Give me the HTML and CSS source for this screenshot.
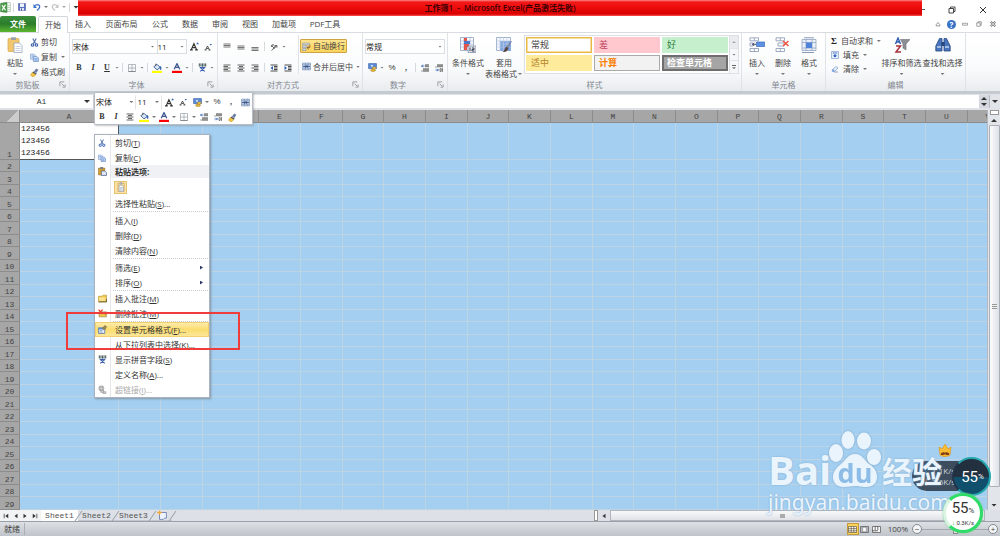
FILE: index.html
```html
<!DOCTYPE html>
<html lang="zh-CN">
<head>
<meta charset="utf-8">
<title>工作簿1 - Microsoft Excel</title>
<link rel="stylesheet" href="styles.css">
</head>
<body>
<svg class="defs" aria-hidden="true">
  <defs>
    <symbol id="i-excel" viewBox="0 0 16 16"><path d="M5 1h10v13H5z" fill="#fff" stroke="#9bb59b"/><path d="M1 2l9-1v14l-9-1z" fill="#4ea04e" stroke="#2c7a2f"/><path d="M3 5l5 7M8 4l-5 8" stroke="#fff" stroke-width="1.8"/><path d="M11 5h3M11 8h3M11 11h3" stroke="#8cba8c"/></symbol>
    <symbol id="i-save" viewBox="0 0 16 16"><path d="M1 1h14v14H1z" fill="#5a6fc4" stroke="#3f4d9c"/><path d="M4 1h8v7H4z" fill="#eef2fb"/><path d="M4 10h8v5H4z" fill="#dfe4f2"/><path d="M6 11h2v4H6z" fill="#3f4d9c"/></symbol>
    <symbol id="i-undo" viewBox="0 0 16 16"><path d="M3 6c5-5 12-2 10 3-1 3-3 4-5 6" fill="none" stroke="currentColor" stroke-width="2.6"/><path d="M1 2v8h7z" fill="currentColor"/></symbol>
    <symbol id="i-paste" viewBox="0 0 16 16"><rect x="1" y="1.500" width="11" height="13" rx="1" fill="#f2c66d" stroke="#d9a64a" stroke-width=".7"/><rect x="4" y=".3" width="5" height="2.700" rx=".6" fill="#9aa0aa"/><path d="M7 6h5.500L15 8.500V15.500H7z" fill="#fff" stroke="#8a9bb5" stroke-width=".7"/><path d="M8.500 9.500h5M8.500 11.500h5M8.500 13.500h5" stroke="#b0bfd5" stroke-width=".7"/></symbol>
    <symbol id="i-cut" viewBox="0 0 16 16"><path d="M5 1l5 9M11 1l-5 9" stroke="#5574ad" stroke-width="2"/><circle cx="4.500" cy="12.500" r="2.300" fill="none" stroke="#2e57a8" stroke-width="1.900"/><circle cx="11.500" cy="12.500" r="2.300" fill="none" stroke="#2e57a8" stroke-width="1.900"/></symbol>
    <symbol id="i-copy" viewBox="0 0 16 16"><path d="M1 2h6l2 2v7H1z" fill="#dce9fa" stroke="#5f87c4"/><path d="M6 6h6l3 3v6H6z" fill="#c5dbf7" stroke="#4873b8"/><path d="M8 10h5M8 12.500h5M3 5h3M3 7.500h2" stroke="#4873b8"/></symbol>
    <symbol id="i-brush" viewBox="0 0 16 16"><path d="M11 1l4 2-4 6-4-3z" fill="#6b7da5"/><path d="M6 6l6 4-2 2-6-4z" fill="#444e66"/><path d="M4 8l6 4-4 4-5-3z" fill="#f3c540" stroke="#c89421"/></symbol>
    <symbol id="i-growA" viewBox="0 0 16 16"><path d="M2 14L7 3l5 11M4 10h6M0 14h5M9 14h5" fill="none" stroke="#333" stroke-width="2"/><path d="M11 4l2.500-3.500L16 4z" fill="#2f62b5"/></symbol>
    <symbol id="i-shrinkA" viewBox="0 0 16 16"><path d="M3 14L7 6l4 8M5 11h4M1 14h4M9 14h4" fill="none" stroke="#333" stroke-width="1.600"/><path d="M11 2h5l-2.500 3z" fill="#2f62b5"/></symbol>
    <symbol id="i-borders" viewBox="0 0 16 16"><path d="M1 1h14v14H1zM8 1v14M1 8h14" fill="none" stroke="#9298a2" stroke-width="1.300"/><path d="M1 15h14" stroke="#777" stroke-width="1.500"/></symbol>
    <symbol id="i-fill" viewBox="0 0 16 16"><path d="M3 6l5-4 5 5-5 4z" fill="#dce6f5" stroke="#44679f" stroke-width="1.600"/><path d="M6 5V1" stroke="#555" stroke-width="1.300"/><path d="M13 5c2 1 2 4 1 6-1-1-2-4-1-6z" fill="#3768b8" stroke="#3768b8"/><path d="M0 12.500h16V16H0z" fill="#ff0"/></symbol>
    <symbol id="i-color" viewBox="0 0 16 16"><path d="M3.500 10L8 1l4.500 9M5.500 7h5" fill="none" stroke="#3b5690" stroke-width="2"/><path d="M0 12.500h16V16H0z" fill="#f00"/></symbol>
    <symbol id="i-phon" viewBox="0 0 16 16"><path d="M1 2h14M1 5h14M3 1v5M8 1v5M13 1v5" stroke="#455" stroke-width="1.400"/><path d="M3 8h10M8 6v2M4 8l8 7M12 8l-8 7" fill="none" stroke="#3f62b0" stroke-width="1.900"/></symbol>
    <symbol id="i-vtop" viewBox="0 0 16 16"><path d="M1 2h14M1 5h14M1 8h14" stroke="#777" stroke-width="2.200"/></symbol>
    <symbol id="i-vmid" viewBox="0 0 16 16"><path d="M1 6h14M1 9h14M1 12h14" stroke="#777" stroke-width="2.200"/></symbol>
    <symbol id="i-vbot" viewBox="0 0 16 16"><path d="M1 9h14M1 12h14M1 15h14" stroke="#777" stroke-width="2.200"/></symbol>
    <symbol id="i-left" viewBox="0 0 16 16"><path d="M1 2h14M1 5h9M1 8h14M1 11h9M1 14h14" stroke="#555" stroke-width="1.800"/></symbol>
    <symbol id="i-center" viewBox="0 0 16 16"><path d="M1 2h14M4 5h8M1 8h14M4 11h8M1 14h14" stroke="#555" stroke-width="1.800"/></symbol>
    <symbol id="i-right" viewBox="0 0 16 16"><path d="M1 2h14M6 5h9M1 8h14M6 11h9M1 14h14" stroke="#555" stroke-width="1.800"/></symbol>
    <symbol id="i-orient" viewBox="0 0 16 16"><path d="M2 4l7 7M5 2l7 7M2 8l4-5M6 12l4-5M3 15L14 5M14 5v4M14 5h-4" fill="none" stroke="#555" stroke-width="1.700"/></symbol>
    <symbol id="i-outdent" viewBox="0 0 16 16"><path d="M1 2h14M8 5h7M8 8h7M8 11h7M1 14h14" stroke="#444" stroke-width="1.900"/><path d="M6 4v8L1 8z" fill="#2f62b5"/></symbol>
    <symbol id="i-indent" viewBox="0 0 16 16"><path d="M1 2h14M8 5h7M8 8h7M8 11h7M1 14h14" stroke="#444" stroke-width="1.900"/><path d="M1 4v8l5-4z" fill="#2f62b5"/></symbol>
    <symbol id="i-wrap" viewBox="0 0 16 16"><path d="M1 2h12v3H1zM1 7h8v3H1zM1 12h6v3H1z" fill="#e7eefb" stroke="#6d7da0"/><path d="M14 5v5h-4M12 8l-3 2.500 3 2.500" fill="none" stroke="#8b5a1e" stroke-width="1.500"/></symbol>
    <symbol id="i-merge" viewBox="0 0 16 16"><path d="M1 2h14v12H1z" fill="#cfdcf0" stroke="#5f7ca8"/><path d="M1 5h14M1 11h14M6 2v3M11 2v3M6 11v3M11 11v3" stroke="#5f7ca8"/><path d="M2 8h4M10 8h4M6 6v4M10 6v4M7 9.500l1-3 1 3" fill="none" stroke="#1f3b78" stroke-width="1.400"/></symbol>
    <symbol id="i-money" viewBox="0 0 16 16"><path d="M1 1h14v9H1z" fill="#5b8ad8" stroke="#31589f"/><circle cx="7" cy="5" r="2" fill="#cfe0fa"/><ellipse cx="11" cy="9" rx="3.500" ry="2" fill="#f4ce55" stroke="#b18420"/><ellipse cx="9" cy="13" rx="4.500" ry="2" fill="#e9ba3a" stroke="#a67a18"/></symbol>
    <symbol id="i-incdec" viewBox="0 0 16 16"><path d="M7 4H1M3.500 1.500L1 4l2.500 2.500" fill="none" stroke="#2f62b5" stroke-width="1.700"/><path d="M9 1h2v5H9zM13 1h2v5h-2zM5 9h2v6H5zM9 9h2v6H9zM13 9h2v6h-2z" fill="none" stroke="#555" stroke-width="1.300"/><path d="M2 13v2" stroke="#444" stroke-width="2"/></symbol>
    <symbol id="i-decdec" viewBox="0 0 16 16"><path d="M1 12h6M4.500 9.500L7 12l-2.500 2.500" fill="none" stroke="#2f62b5" stroke-width="1.700"/><path d="M5 1h2v5H5zM9 1h2v5H9zM13 1h2v5h-2zM10 9h2v6h-2zM14 9h1v6h-1z" fill="none" stroke="#555" stroke-width="1.300"/><path d="M2 5v2" stroke="#444" stroke-width="2"/></symbol>
    <symbol id="i-cond" viewBox="0 0 16 16"><path d="M.5.500h13v13H.5z" fill="#fff" stroke="#a3b4cf"/><path d="M.5 4h13M.5 7h13M.5 10h13M4 0v14M10 0v14" stroke="#a3b4cf" stroke-width=".7"/><path d="M4 1h3v3H4zM4 7h5v3H4zM4 10h3v3H4z" fill="#e55349"/><path d="M4 4h6v3H4z" fill="#4b79c9"/><path d="M8 9h8v6.500H8z" fill="#dce3ee" stroke="#77859b" stroke-width=".7"/><path d="M10 10.500v3.500M12 11h2v1.500h-2V14h2.500" fill="none" stroke="#445"/></symbol>
    <symbol id="i-tblfmt" viewBox="0 0 16 16"><path d="M.5.500h14v13H.5z" fill="#f5f9ff" stroke="#a3b4cf"/><path d="M4 4h11v10H4z" fill="#7fa7e2"/><path d="M.5 4h14M.5 7h14M.5 10h14M4 0v14M7.500 0v14M11 0v14" stroke="#b9c8df" stroke-width=".7"/><path d="M15.500 4l-5 6 1.500 1.500z" fill="#8c94a5" stroke="#69718a" stroke-width=".5"/><path d="M10.500 9.500l2 2c-1 3-3 3.500-6 3.500 2-1 2-4 4-5.500z" fill="#5a4a46"/></symbol>
    <symbol id="i-insert" viewBox="0 0 16 16"><path d="M1 .8h8.500v3H1zM1 11.500h8.500v3H1zM5.300.8v3M5.300 11.500v3M1 6h3v3H1z" fill="#fff" stroke="#8798b3" stroke-width=".8"/><path d="M7.500 5h8v4.500h-8z" fill="#5d91e3" stroke="#3b6cb8" stroke-width=".7"/><path d="M7 7.300H3.500M5 5.800L3.500 7.300 5 8.800" fill="none" stroke="#335" stroke-width=".9"/></symbol>
    <symbol id="i-delete" viewBox="0 0 16 16"><path d="M1 .8h8.500v3H1zM1 11.500h8.500v3H1zM5.300.8v3M5.300 11.500v3M3 6h6v3H3z" fill="#fff" stroke="#8798b3" stroke-width=".8"/><path d="M8 4l5.500 5M13.500 4L8 9" stroke="#f0523d" stroke-width="1.500"/></symbol>
    <symbol id="i-format" viewBox="0 0 16 16"><path d="M1 2.500h14v11H1z" fill="#eaf0fa" stroke="#93a4c2" stroke-width=".8"/><path d="M1 5.500h14M1 11h14M5 2v12M11 2v12" stroke="#93a4c2" stroke-width=".8"/><path d="M5 5.500h6V11H5z" fill="#4f83da"/><path d="M3 .8h10M1 15.500h12" stroke="#6a7fa5" stroke-width=".8"/></symbol>
    <symbol id="i-filldown" viewBox="0 0 16 16"><path d="M1 1h14v14H1z" fill="#e6effc" stroke="#5a7fc0"/><path d="M4 3h8v2H4z" fill="#fff" stroke="#5a7fc0"/><path d="M8 6v4M5.500 9.500h5L8 12z" fill="#2459bd" stroke="#2459bd" stroke-width="2"/></symbol>
    <symbol id="i-eraser" viewBox="0 0 16 16"><path d="M2 10l8-7 4 3-7 7H3z" fill="#e8f0fb" stroke="#6d8fc5" stroke-width="1.300"/><path d="M2 10l2-2 4 4-1 1H3z" fill="#7ea3de"/><path d="M6 14h8" stroke="#7a8cab" stroke-width="1.500"/></symbol>
    <symbol id="i-sort" viewBox="0 0 16 16"><path d="M1.500 7L4 1l2.500 6M2.500 5h3" fill="none" stroke="#2e5cb4" stroke-width="1.400"/><path d="M2 9h4.500L2 15h5" fill="none" stroke="#a8313c" stroke-width="1.500"/><path d="M6.500 2.500h9.500l-4 4.500v6l-3-2V7z" fill="#8c8f94" stroke="#6d7075" stroke-width=".6"/></symbol>
    <symbol id="i-find" viewBox="0 0 16 16"><path d="M4.500 1.500H7v12.500H.8V9zM11.500 1.500H9v12.500h6.200V9z" fill="#4a76bd" stroke="#27477f" stroke-width=".8"/><path d="M6.500 5h3v4h-3z" fill="#27477f"/><path d="M2 10h4M10 10h4" stroke="#bfd3f2" stroke-width="1.600"/></symbol>
    <symbol id="i-clip2" viewBox="0 0 16 16"><path d="M3 2h10v13H3z" fill="#f6dca0" stroke="#c39c50"/><path d="M6 .5h4V4H6z" fill="#a8acb3"/><path d="M5 5h4l3 3v7H5z" fill="#fff" stroke="#8b98ae"/><path d="M6.500 9h4M6.500 11h4M6.500 13h4" stroke="#8b98ae"/></symbol>
    <symbol id="i-pastesmall" viewBox="0 0 16 16"><path d="M1 2h11v12H1z" fill="#d9a12c" stroke="#7d6326"/><path d="M4 0h5v4H4z" fill="#7b7f88"/><path d="M6 7h6l3 3v5H6z" fill="#dfe9fa" stroke="#4b5f88" stroke-width="1.300"/></symbol>
    <symbol id="i-note" viewBox="0 0 16 16"><path d="M1 4h6l2-2h6v12H1z" fill="#edc64d" stroke="#b08b25"/><path d="M2 6h11v6H2z" fill="#fae58e"/><path d="M1 14h14V9" fill="none" stroke="#5d5843" stroke-width="1.500"/></symbol>
    <symbol id="i-notedel" viewBox="0 0 16 16"><path d="M2 5h13v9H2z" fill="#edc64d" stroke="#8e793d"/><path d="M1 1l7 8M8 1L1 9" stroke="#e33b25" stroke-width="2.300"/><path d="M10 6l4 5" stroke="#c16a2d" stroke-width="1.500"/></symbol>
    <symbol id="i-cells" viewBox="0 0 16 16"><path d="M1 5h11v10H1z" fill="#e7f0fe" stroke="#54749f" stroke-width="1.400"/><path d="M1 5h10v3H1z" fill="#5b8ad8"/><path d="M3 10h5M3 12.500h5" stroke="#54749f"/><path d="M8 6l4-5 3 2-2 4-3 1z" fill="#a98f4c" stroke="#5b563f"/></symbol>
    <symbol id="i-link" viewBox="0 0 16 16"><circle cx="6" cy="6" r="5" fill="#a9a9a9"/><path d="M1 6h10M6 1v10" stroke="#ddd"/><path d="M5 10h5v3H5zM9 12h5v3H9z" fill="#ddd" stroke="#999" stroke-width="1.300"/></symbol>
    <symbol id="i-newsheet" viewBox="0 0 16 16"><path d="M4 4h11v9h-3l-2 2H4z" fill="#eef4ff" stroke="#6377a8" stroke-width="1.300"/><path d="M4 1l1 2 3 1-3 1-1 3-1-3-3-1 3-1z" fill="#f2a93b" stroke="#f2a93b"/></symbol>
    <symbol id="i-launch" viewBox="0 0 8 8"><path d="M1 6V1h5" fill="none" stroke="#8f959d"/><path d="M3 3l3 3M7 4v3H4" fill="none" stroke="#8f959d"/></symbol>
    <symbol id="i-restore" viewBox="0 0 8 8"><path d="M1 2.500h4.500V7H1zM2.500 2.500V1H7v4.500H5.500" fill="none" stroke="currentColor" stroke-width=".9"/></symbol>
    <symbol id="i-close" viewBox="0 0 8 8"><path d="M1 1l6 6M7 1L1 7" stroke="currentColor"/></symbol>
    <symbol id="i-xbox" viewBox="0 0 8 8"><path d="M1 1l6 6M7 1L1 7" stroke="#777" stroke-width="2.400"/><path d="M1 1l6 6M7 1L1 7" stroke="#fff" stroke-width=".8"/></symbol>
    <symbol id="i-min" viewBox="0 0 8 8"><path d="M.5 3h7v2.500h-7z" fill="#fff" stroke="#777" stroke-width=".9"/></symbol>
    <symbol id="i-caretup" viewBox="0 0 8 8"><path d="M1.500 5L4 2l2.500 3v1.500h-5z" fill="#fff" stroke="#777"/></symbol>
    <symbol id="i-grid" viewBox="0 0 10 8"><path d="M.5.500h9v7h-9zM.5 3h9M.5 5.500h9M3.500.500v7M6.500.500v7" fill="#fff" stroke="#625638" stroke-width=".8"/></symbol>
    <symbol id="i-page" viewBox="0 0 10 8"><path d="M.5.500h9v7h-9z" fill="#b8bcc2" stroke="#666"/><path d="M3 1.500h4v5H3z" fill="#fff" stroke="#777" stroke-width=".6"/></symbol>
    <symbol id="i-break" viewBox="0 0 10 8"><path d="M.5.500h9v7h-9z" fill="#fff" stroke="#666"/><path d="M3.500 0v5M6.500 0v5M0 5.500h6.500" stroke="#555"/></symbol>
  </defs>
</svg>

<div class="app">
  <header class="titlebar">
    <div class="quick">
      <svg class="ic11"><use href="#i-excel"/></svg><span class="vsep"></span>
      <button aria-label="保存"><svg class="ic8"><use href="#i-save"/></svg></button>
      <button class="blue" aria-label="撤消"><svg class="ic8"><use href="#i-undo"/></svg></button><i class="caret"></i>
      <button class="redo" aria-label="恢复"><svg class="ic8"><use href="#i-undo"/></svg></button><i class="caret faint"></i>
      <span class="vsep"></span><i class="caret big"></i>
    </div>
    <h1>工作簿1&nbsp; -&nbsp; Microsoft Excel(产品激活失败)</h1>
    <div class="wincontrols">
      <button class="minimize" aria-label="最小化"></button>
      <button aria-label="还原"><svg class="ic8"><use href="#i-restore"/></svg></button>
      <button aria-label="关闭"><svg class="ic8"><use href="#i-close"/></svg></button>
    </div>
  </header>

  <nav class="tabs">
    <button class="file">文件</button>
    <button class="active">开始</button>
    <button>插入</button>
    <button class="wide">页面布局</button>
    <button>公式</button>
    <button>数据</button>
    <button>审阅</button>
    <button>视图</button>
    <button class="mid">加载项</button>
    <button class="pdf">PDF工具</button>
    <div class="tabtools">
      <button aria-label="折叠功能区"><svg class="ic6"><use href="#i-caretup"/></svg></button>
      <button class="help" aria-label="帮助">?</button>
      <button aria-label="最小化窗口"><svg class="ic6"><use href="#i-min"/></svg></button>
      <button aria-label="还原窗口"><svg class="ic6"><use href="#i-restore"/></svg></button>
      <button aria-label="关闭窗口"><svg class="ic6"><use href="#i-xbox"/></svg></button>
    </div>
  </nav>

  <section class="ribbon">
    <div class="group g-clip">
      <div class="body">
        <button class="bigbtn"><svg class="ic16"><use href="#i-paste"/></svg><span>粘贴</span><i class="caret"></i></button>
        <div class="list">
          <button><svg class="ic9"><use href="#i-cut"/></svg>剪切</button>
          <button><svg class="ic9"><use href="#i-copy"/></svg>复制<i class="caret"></i></button>
          <button><svg class="ic9"><use href="#i-brush"/></svg>格式刷</button>
        </div>
      </div>
      <footer>剪贴板<svg class="launch"><use href="#i-launch"/></svg></footer>
    </div>
    <div class="group g-font">
      <div class="body rows">
        <div class="row">
          <label class="combo fontname"><select aria-label="字体"><option>宋体</option></select><i class="caret"></i></label>
          <label class="combo fontsize"><select aria-label="字号"><option>11</option></select><i class="caret"></i></label>
          <button class="tool" aria-label="增大字号"><svg class="ic9"><use href="#i-growA"/></svg></button>
          <button class="tool" aria-label="减小字号"><svg class="ic8"><use href="#i-shrinkA"/></svg></button>
        </div>
        <div class="row">
          <button class="tool ch b">B</button><button class="tool ch i">I</button><button class="tool ch u">U</button><i class="caret"></i>
          <span class="vsep"></span><button class="tool" aria-label="边框"><svg class="ic8"><use href="#i-borders"/></svg></button><i class="caret"></i>
          <span class="vsep"></span><button class="tool" aria-label="填充颜色"><svg class="ic10"><use href="#i-fill"/></svg></button><i class="caret"></i>
          <button class="tool" aria-label="字体颜色"><svg class="ic10"><use href="#i-color"/></svg></button><i class="caret"></i>
          <span class="vsep"></span><button class="tool" aria-label="拼音"><svg class="ic9"><use href="#i-phon"/></svg></button><i class="caret"></i>
        </div>
      </div>
      <footer>字体<svg class="launch"><use href="#i-launch"/></svg></footer>
    </div>
    <div class="group g-align">
      <div class="body">
        <div class="rows">
          <div class="row"><button class="tool"><svg class="ic8"><use href="#i-vtop"/></svg></button><button class="tool"><svg class="ic8"><use href="#i-vmid"/></svg></button><button class="tool"><svg class="ic8"><use href="#i-vbot"/></svg></button><span class="vsep"></span><button class="tool"><svg class="ic8"><use href="#i-orient"/></svg></button><i class="caret"></i></div>
          <div class="row"><button class="tool"><svg class="ic8"><use href="#i-left"/></svg></button><button class="tool"><svg class="ic8"><use href="#i-center"/></svg></button><button class="tool"><svg class="ic8"><use href="#i-right"/></svg></button><span class="vsep"></span><button class="tool"><svg class="ic8"><use href="#i-outdent"/></svg></button><button class="tool"><svg class="ic8"><use href="#i-indent"/></svg></button></div>
        </div>
        <div class="rows ruled">
          <div class="row"><button class="labelled on"><svg class="ic9"><use href="#i-wrap"/></svg>自动换行</button></div>
          <div class="row"><button class="labelled"><svg class="ic9"><use href="#i-merge"/></svg>合并后居中<i class="caret"></i></button></div>
        </div>
      </div>
      <footer>对齐方式<svg class="launch"><use href="#i-launch"/></svg></footer>
    </div>
    <div class="group g-number">
      <div class="body rows">
        <div class="row"><label class="combo numfmt"><select aria-label="数字格式"><option>常规</option></select><i class="caret"></i></label></div>
        <div class="row"><button class="tool"><svg class="ic9"><use href="#i-money"/></svg></button><i class="caret"></i><button class="tool ch">%</button><button class="tool ch b">,</button><span class="vsep"></span><button class="tool"><svg class="ic8"><use href="#i-incdec"/></svg></button><button class="tool"><svg class="ic8"><use href="#i-decdec"/></svg></button></div>
      </div>
      <footer>数字<svg class="launch"><use href="#i-launch"/></svg></footer>
    </div>
    <div class="group g-styles">
      <div class="body">
        <button class="bigbtn w37"><svg class="ic16"><use href="#i-cond"/></svg><span>条件格式</span><i class="caret"></i></button>
        <button class="bigbtn w37"><svg class="ic16"><use href="#i-tblfmt"/></svg><span>套用</span><span class="second">表格格式<i class="caret"></i></span></button>
        <div class="gallery">
          <div class="swatches">
            <button class="normal">常规</button><button class="bad">差</button><button class="good">好</button>
            <button class="neutral">适中</button><button class="calc">计算</button><button class="check">检查单元格</button>
          </div>
          <div class="galscroll">
            <button aria-label="上一行"><i class="caret up faint"></i></button><button aria-label="下一行"><i class="caret"></i></button><button class="more" aria-label="其他"><i class="caret"></i></button>
          </div>
        </div>
      </div>
      <footer>样式</footer>
    </div>
    <div class="group g-cells">
      <div class="body">
        <button class="bigbtn w26"><svg class="ic16"><use href="#i-insert"/></svg><span>插入</span><i class="caret"></i></button>
        <button class="bigbtn w26"><svg class="ic16"><use href="#i-delete"/></svg><span>删除</span><i class="caret"></i></button>
        <button class="bigbtn w26"><svg class="ic16"><use href="#i-format"/></svg><span>格式</span><i class="caret"></i></button>
      </div>
      <footer>单元格</footer>
    </div>
    <div class="group g-edit">
      <div class="body">
        <div class="list tight">
          <button><b class="sigma">Σ</b>自动求和<i class="caret"></i></button>
          <button><svg class="ic8"><use href="#i-filldown"/></svg>填充<i class="caret"></i></button>
          <button><svg class="ic8"><use href="#i-eraser"/></svg>清除<i class="caret"></i></button>
        </div>
        <button class="bigbtn w42"><svg class="ic16"><use href="#i-sort"/></svg><span>排序和筛选</span><i class="caret"></i></button>
        <button class="bigbtn w42"><svg class="ic16"><use href="#i-find"/></svg><span>查找和选择</span><i class="caret"></i></button>
      </div>
      <footer>编辑</footer>
    </div>
  </section>

  <section class="formulabar">
    <div class="namebox"><input value="A1" aria-label="名称框"><i class="caret big"></i></div>
    <input class="formula" aria-label="编辑栏">
    <div class="spin"><i class="caret big up"></i><i class="caret big"></i></div>
    <button class="expand" aria-label="展开编辑栏"><i class="caret big"></i></button>
  </section>

  <main class="workspace">
    <div class="sheet">
      <table id="grid">
        <colgroup id="cols"></colgroup>
        <thead><tr id="heads"></tr></thead>
        <tbody id="rows"></tbody>
      </table>
    </div>
    <div class="vscroll">
      <span class="split"></span>
      <button aria-label="向上滚动"><i class="caret big up"></i></button>
      <div class="thumb"><span class="grip"></span></div>
      <span class="track"></span>
      <button aria-label="向下滚动"><i class="caret big"></i></button>
    </div>
  </main>

  <section class="sheetbar">
    <div class="sheetnav">
      <button aria-label="第一张"><svg class="ic6" viewBox="0 0 8 8"><path d="M1 1v6h1V1zM7 1v6L3 4z"/></svg></button>
      <button aria-label="上一张"><svg class="ic6" viewBox="0 0 8 8"><path d="M6 1v6L2 4z"/></svg></button>
      <button aria-label="下一张"><svg class="ic6" viewBox="0 0 8 8"><path d="M2 1v6l4-3z"/></svg></button>
      <button aria-label="最后一张"><svg class="ic6" viewBox="0 0 8 8"><path d="M6 1v6h1V1zM1 1v6l4-3z"/></svg></button>
    </div>
    <button class="stab current">Sheet1</button>
    <button class="stab">Sheet2</button>
    <button class="stab">Sheet3</button>
    <button class="stab add" aria-label="插入工作表"><svg class="ic10"><use href="#i-newsheet"/></svg></button>
    <div class="hscroll">
      <span class="hsplit"></span>
      <button aria-label="向左滚动"><svg class="ic6" viewBox="0 0 8 8"><path d="M6 1v6L2 4z"/></svg></button>
      <div class="hthumb"><span class="hgrip"></span></div>
      <span class="hend"></span>
    </div>
  </section>

  <footer class="status">
    <span class="ready">就绪</span>
    <div class="views">
      <button class="on" aria-label="普通"><svg><use href="#i-grid"/></svg></button>
      <button aria-label="页面布局视图"><svg><use href="#i-page"/></svg></button>
      <button aria-label="分页预览"><svg><use href="#i-break"/></svg></button>
    </div>
    <span class="zoomtext">100%</span>
    <button class="round" aria-label="缩小">−</button>
    <input type="range" aria-label="显示比例">
    <button class="round" aria-label="放大">+</button>
  </footer>
</div>

<div class="pill"><span><i class="up-arrow">↑</i> 1.1K/s</span><span><i class="down-arrow">↓</i> 7.6K/s</span></div>

<div class="watermark">
  <div class="wm-top"><span class="bai">Bai</span>
    <span class="paw"><svg viewBox="0 0 54 58"><g fill="currentColor"><ellipse cx="8" cy="22" rx="7" ry="9"/><ellipse cx="20" cy="9" rx="6.500" ry="9"/><ellipse cx="36" cy="10" rx="7" ry="8.500"/><ellipse cx="46" cy="26" rx="7" ry="8"/><path d="M27 23c7 0 9 6 14 10 6 4 8 8 8 13 0 6-4 10-11 10-5 0-7-1-11-1s-7 1-11 1C9 56 5 52 5 46c0-5 3-9 8-13 5-4 7-10 14-10z"/></g></svg><b>du</b></span>
    <span class="jy">经验</span></div>
  <div class="wm-url">jingyan.baidu.com</div>
</div>

<div class="boost">
  <div class="ball dark">55<small>%</small></div>
  <svg class="crown" viewBox="0 0 14 14"><path d="M1 4l3 2 3-5 3 5 3-2-1 8c-3 2-7 2-10 0z" fill="#f8bd32" stroke="#d98b18" stroke-width=".6"/><path d="M3 10l3-1 1 1 1-1 3 1v2H8L7 11l-1 1H3z" fill="#824116"/></svg>
</div>
<div class="ball green"><span>55<small>%</small></span><em><i>↓</i> 0.3K/s</em></div>

<div class="minibar">
  <div class="row">
    <label class="combo m-name"><select aria-label="浮动字体"><option>宋体</option></select><i class="caret"></i></label>
    <label class="combo m-size"><select aria-label="浮动字号"><option>11</option></select><i class="caret"></i></label>
    <button class="tool"><svg class="ic9"><use href="#i-growA"/></svg></button><button class="tool"><svg class="ic8"><use href="#i-shrinkA"/></svg></button><button class="tool"><svg class="ic9"><use href="#i-money"/></svg></button><i class="caret"></i><button class="tool ch">%</button><button class="tool ch b">,</button><button class="tool"><svg class="ic9"><use href="#i-merge"/></svg></button>
  </div>
  <div class="row">
    <button class="tool ch b">B</button><button class="tool ch i">I</button><button class="tool"><svg class="ic8"><use href="#i-center"/></svg></button><button class="tool"><svg class="ic10"><use href="#i-fill"/></svg></button><i class="caret"></i><button class="tool"><svg class="ic10"><use href="#i-color"/></svg></button><i class="caret"></i><button class="tool"><svg class="ic8"><use href="#i-borders"/></svg></button><i class="caret"></i><button class="tool"><svg class="ic8"><use href="#i-incdec"/></svg></button><button class="tool"><svg class="ic8"><use href="#i-decdec"/></svg></button><button class="tool"><svg class="ic9"><use href="#i-brush"/></svg></button>
  </div>
</div>

<div class="menu">
  <button><svg class="ic8"><use href="#i-cut"/></svg><span>剪切(<u>T</u>)</span></button>
  <button><svg class="ic8"><use href="#i-copy"/></svg><span>复制(<u>C</u>)</span></button>
  <div class="menuhead"><svg class="ic9"><use href="#i-pastesmall"/></svg><b>粘贴选项:</b></div>
  <div class="pasteopts"><button aria-label="粘贴"><svg class="ic10"><use href="#i-clip2"/></svg></button></div>
  <button><span>选择性粘贴(<u>S</u>)...</span></button>
  <hr>
  <button><span>插入(<u>I</u>)</span></button>
  <button><span>删除(<u>D</u>)</span></button>
  <button><span>清除内容(<u>N</u>)</span></button>
  <hr>
  <button class="sub"><span>筛选(<u>E</u>)</span></button>
  <button class="sub"><span>排序(<u>O</u>)</span></button>
  <hr class="thin">
  <button><svg class="ic9"><use href="#i-note"/></svg><span>插入批注(<u>M</u>)</span></button>
  <button><svg class="ic9"><use href="#i-notedel"/></svg><span>删除批注(<u>M</u>)</span></button>
  <hr class="thin">
  <button class="hot"><svg class="ic9"><use href="#i-cells"/></svg><span>设置单元格格式(<u>F</u>)...</span></button>
  <button><span>从下拉列表中选择(<u>K</u>)...</span></button>
  <button><svg class="ic9"><use href="#i-phon"/></svg><span>显示拼音字段(<u>S</u>)</span></button>
  <button><span>定义名称(<u>A</u>)...</span></button>
  <button disabled><svg class="ic9"><use href="#i-link"/></svg><span>超链接(<u>I</u>)...</span></button>
</div>
<div class="marker"></div>
<script src="script.js"></script>
</body>
</html>
```

FILE: script.js
```js
const letters = 'ABCDEFGHIJKLMNOPQRSTUV'.split('');
const cols = document.getElementById('cols');
const heads = document.getElementById('heads');
const rows = document.getElementById('rows');

function add(parent, tag, className, text) {
  const el = document.createElement(tag);
  if (className) el.className = className;
  if (text) el.textContent = text;
  parent.appendChild(el);
  return el;
}

add(cols, 'col', 'c-num');
add(heads, 'th', 'corner');
letters.forEach((letter, i) => {
  const size = letter === 'A' ? 'c-a' : letter === 'D' ? 'c-d' : i % 3 === 0 ? 'c-narrow' : 'c-std';
  add(cols, 'col', size);
  add(heads, 'th', '', letter);
});

for (let r = 1; r <= 29; r++) {
  const tr = add(rows, 'tr');
  add(tr, 'th', '', String(r));
  letters.forEach((letter) => {
    const first = r === 1 && letter === 'A';
    add(tr, 'td', first ? 'selected' : '', first ? '123456\n123456\n123456' : '');
  });
}
```

FILE: styles.css
```css
* { box-sizing: border-box; }
body { margin: 0; height: 100vh; overflow: hidden; position: relative; background: #fff; color: #444; font: 8px/12px "Open Sans", "Noto Sans CJK SC", sans-serif; }
button, input, select { font: inherit; color: inherit; background: none; border: 0; padding: 0; margin: 0; border-radius: 0; }
button { display: flex; align-items: center; justify-content: center; white-space: nowrap; }
svg { display: block; flex: none; }
.defs { display: none; }
.app { display: flex; flex-direction: column; height: 100vh; }
.ic6 { width: 6px; height: 6px; }
.ic8 { width: 8px; height: 8px; }
.ic9 { width: 9px; height: 9px; }
.ic10 { width: 10px; height: 10px; }
.ic11 { width: 11px; height: 11px; }
.ic16 { width: 16px; height: 16px; }
.caret { flex: none; width: 4px; height: 2px; margin: 0 1px; background: #777; clip-path: polygon(0 0, 100% 0, 50% 100%); }
.caret.big { width: 6px; height: 3px; background: #333; }
.caret.up { transform: rotate(180deg); }
.caret.faint { background: #aaa; }
.vsep { flex: none; width: 1px; height: 9px; margin: 0 2px; background: #d5d9de; }

.titlebar { display: flex; height: 16px; flex: none; }
.quick { width: 78px; display: flex; align-items: center; gap: 2px; padding-bottom: 2px; }
.quick .vsep { margin: 0; }
.quick button { margin-left: 2px; }
.quick .blue { color: #3b6fc9; margin-left: 5px; }
.quick .redo { color: #c3c6ca; margin-left: 0; transform: scaleX(-1); }
.titlebar h1 { flex: 1; margin: 0; font-size: 8px; line-height: 16px; font-weight: 600; text-align: center; color: #3c0000; background: linear-gradient(#f88 0, #f21818 2px, #f11010 6px, #d90000 14px, #f55 16px); }
.wincontrols { width: 78px; display: flex; align-items: center; gap: 23px; padding: 3px 13px 0 0; color: #333; }
.minimize { width: 3px; height: 1px; margin-right: auto; background: #555; }

.tabs { display: flex; height: 17px; flex: none; border-bottom: 1px solid #d9dce0; }
.tabs > button { width: 30px; height: 16px; }
.tabs > .wide { width: 47px; }
.tabs > .mid { width: 38px; }
.tabs > .pdf { width: 44px; }
.tabs > .file { width: 36px; margin-right: 2px; color: #fff; font-weight: 600; background: linear-gradient(#3c8e3c, #2b7d2b 50%, #5db62f); border-radius: 2px 2px 0 0; }
.tabs > .active { height: 17px; background: #fff; border: 1px solid #d3d7dc; border-bottom: 0; border-radius: 2px 2px 0 0; }
.tabtools { margin-left: auto; display: flex; align-items: center; gap: 8px; padding-right: 4px; color: #777; }
.tabtools .help { width: 9px; height: 9px; border-radius: 50%; background: #3872c6; color: #fff; font-weight: 700; line-height: 9px; margin: 0 -2px; }

.ribbon { display: flex; flex: none; height: 61px; background: linear-gradient(#fff, #fafbfc 60%, #e9ecef); border-bottom: 3px solid #c5cad1; }
.group { display: flex; flex-direction: column; border-right: 1px solid #dfe2e6; flex: none; }
.group .body { flex: 1; display: flex; padding: 2px 2px 0; }
.group footer { position: relative; height: 12px; line-height: 12px; text-align: center; color: #828891; padding-right: 14px; }
.launch { position: absolute; right: 3px; top: 2px; width: 7px; height: 7px; }
.g-clip { width: 70px; }
.g-font { width: 148px; }
.g-align { width: 145px; }
.g-number { width: 85px; }
.g-styles { width: 294px; }
.g-cells { width: 84px; }
.g-edit { width: 140px; }
.g-styles footer, .g-cells footer, .g-edit footer { padding: 0; }
.bigbtn { flex-direction: column; justify-content: flex-start; width: 26px; padding-top: 2px; align-self: flex-start; }
.bigbtn > span { margin-top: 4px; line-height: 12px; }
.bigbtn > .second { display: flex; align-items: center; margin-top: 0; line-height: 10px; }
.bigbtn > .caret { margin-top: 4px; }
.w37 { width: 36px; }
.w42 { width: 42px; }
.list { display: flex; flex-direction: column; gap: 3px; padding: 1px 0 0 2px; }
.list button { justify-content: flex-start; gap: 2px; height: 12px; }
.list .caret { margin-left: 2px; }
.list.tight { gap: 2px; width: 53px; padding: 0 0 0 3px; }
.list.tight button { gap: 4px; }
.list.tight .caret { margin-left: 0; }
.sigma { width: 8px; font: 700 9px/12px "Liberation Serif", serif; color: #222; }
.rows { display: flex; flex-direction: column; gap: 6px; }
.group .body.rows { padding-top: 6px; }
.body > .rows { padding-top: 4px; }
.row { display: flex; align-items: center; height: 15px; }
.tool { width: 14px; height: 14px; flex: none; }
.ch { font: 8px/14px "Liberation Sans", sans-serif; color: #333; }
.ch.b { font-family: "Liberation Serif", serif; font-weight: 700; }
.ch.i { font-family: "Liberation Serif", serif; font-style: italic; font-weight: 700; }
.ch.u { font-family: "Liberation Serif", serif; font-weight: 700; text-decoration: underline; }
.combo { display: flex; align-items: center; height: 15px; border: 1px solid #dadde1; background: #fff; padding-right: 1px; }
.combo select { flex: 1; min-width: 0; appearance: none; height: 13px; color: #222; }
.fontname { width: 87px; }
.fontsize { width: 30px; border-left: 0; }
.numfmt { width: 81px; }
.ruled { border-left: 1px solid #dfe2e6; padding-left: 1px; margin-left: 3px; height: 39px; }
.g-align .body { padding-right: 0; }
.labelled { height: 14px; gap: 2px; padding: 0 1px; border: 1px solid transparent; }
.labelled .caret { margin: 0 0 0 1px; }
.labelled.on { background: linear-gradient(#fde48e, #fbd45c); border-color: #cfa445; border-radius: 1px; }

.gallery { display: flex; flex: 1; height: 39px; margin: 0 0 0 2px; border: 1px solid #dcdfe3; background: #fff; }
.swatches { flex: 1; display: grid; grid-template-columns: repeat(3, 1fr); grid-auto-rows: 16px; gap: 2px; padding: 1px; }
.swatches button { justify-content: flex-start; font-size: 9px; padding-left: 4px; border: 1px solid transparent; }
.swatches .normal { border: 1px solid #e8b84a; box-shadow: inset 0 0 0 1px #f7dc9a; }
.swatches .bad { background: #ffc7ce; color: #c2455c; }
.swatches .good { background: #c6efce; color: #2c8038; }
.swatches .neutral { background: #ffeb9c; color: #b4842a; }
.swatches .calc { background: #f2f2f2; color: #fa7d00; border-color: #aaa; font-weight: 700; }
.swatches .check { background: #a5a5a5; color: #fff; border: 2px solid #6e6e6e; padding-left: 3px; font-weight: 700; }
.galscroll { width: 9px; display: flex; flex-direction: column; border-left: 1px solid #dcdfe3; }
.galscroll button { flex: 1; border-bottom: 1px solid #e1e4e8; background: #f6f7f9; }
.galscroll button:first-child { background: #e9ebee; }
.galscroll .more { border: 0; flex-direction: column; gap: 1px; }
.galscroll .more::before { content: ""; width: 4px; height: 1px; background: #666; }

.formulabar { display: flex; flex: none; height: 16px; padding: 1px 0 2px; background: #dfe2e8; }
.namebox { display: flex; align-items: center; width: 94px; margin-right: 1px; padding-right: 2px; background: #fff; border-right: 1px solid #c9cdd3; }
.namebox input { flex: 1; min-width: 0; text-align: center; height: 13px; font: 8px/13px "Liberation Mono", monospace; color: #333; }
.formula { flex: 1; min-width: 0; background: #fff; }
.spin { width: 10px; display: flex; flex-direction: column; align-items: center; justify-content: center; gap: 3px; background: #d4d8de; }
.expand { width: 11px; background: #e1e4e9; border-left: 1px solid #b5bac2; }

.workspace { display: flex; flex: 1; min-height: 0; }
.sheet { flex: 1; min-width: 0; overflow: hidden; background: #a4cff0; }
#grid { border-collapse: separate; border-spacing: 0; table-layout: fixed; width: 1005px; font: 8px/12px "Liberation Mono", monospace; }
.c-num { width: 20px; }
.c-a { width: 99px; }
.c-d { width: 56px; }
.c-std { width: 42px; }
.c-narrow { width: 41px; }
#grid th { padding: 0; font-weight: 400; color: #444; background: #a6a6a6; border-right: 1px solid #8c8c8c; border-bottom: 1px solid #8c8c8c; }
#grid thead th { height: 13px; line-height: 10px; vertical-align: bottom; }
#grid .corner { background: linear-gradient(135deg, #a6a6a6 60%, #ccc 60%); }
#grid tbody th { vertical-align: bottom; line-height: 9px; }
#grid td { padding: 0; border-right: 1px solid #bdd4e5; border-bottom: 1px solid #bdd4e5; }
#grid tbody tr { height: 12px; }
#grid tbody tr:nth-child(odd) { height: 13px; }
#grid tbody tr:first-child { height: 37px; }
#grid td.selected { white-space: pre; background: #fff; color: #222; vertical-align: bottom; padding-left: 1px; border-color: #555; line-height: 12px; }

.vscroll { width: 13px; display: flex; flex-direction: column; align-items: center; background: #e2e5ea; border-left: 1px solid #b4b9c1; }
.vscroll .split { width: 9px; height: 5px; background: #fff; border: 1px solid #999; }
.vscroll button { width: 12px; height: 10px; }
.thumb { flex: 1; width: 11px; display: flex; align-items: center; justify-content: center; background: linear-gradient(90deg, #fbfcfd, #dde1e7); border: 1px solid #a9aeb7; border-radius: 1px; }
.grip { width: 5px; height: 5px; background: repeating-linear-gradient(#999 0 1px, #eee 1px 2px); }
.track { height: 13px; }

.sheetbar { display: flex; flex: none; height: 12px; background: #dde1e7; border-bottom: 1px solid #9ba0a8; }
.sheetnav { display: flex; align-items: center; justify-content: space-between; width: 41px; padding: 0 3px; background: #f2f3f5; fill: #333; }
.stab { position: relative; width: 37px; height: 11px; font: 8px/11px "Liberation Mono", monospace; color: #555; border-bottom: 1px solid #c3c7cd; }
.stab::after { content: ""; position: absolute; right: -1px; top: 0; width: 1px; height: 12px; background: #9da2aa; transform: rotate(35deg); }
.stab.current { background: #fff; border-color: #fff; }
.stab.add { width: 20px; }
.hscroll { display: flex; width: 406px; margin-left: auto; }
.hsplit { width: 4px; background: #fff; border: 1px solid #999; }
.hscroll button { width: 12px; fill: #333; }
.hthumb { flex: 1; display: flex; align-items: center; justify-content: center; padding-right: 30px; background: linear-gradient(#f8f9fa, #dfe2e7); border: 1px solid #b1b6be; }
.hgrip { width: 5px; height: 4px; background: #aaa; }
.hend { width: 15px; }

.status { display: flex; align-items: center; flex: none; height: 14px; background: linear-gradient(#dde0e4, #bfc4ca); }
.ready { padding: 0 4px; border-right: 1px solid #aaafb6; }
.views { display: flex; margin-left: auto; }
.views button { width: 12px; height: 12px; border: 1px solid transparent; }
.views svg { width: 9px; height: 7px; }
.views .on { background: #fbd35a; border-color: #c59a3a; }
.zoomtext { margin: 0 4px 0 5px; }
.round { width: 10px; height: 10px; border: 1px solid #858a92; border-radius: 50%; background: #f3f4f6; line-height: 8px; }
.status input { width: 66px; height: 10px; appearance: none; background: linear-gradient(#a3a8b0, #a3a8b0) center / 100% 1px no-repeat; }
.status input::-webkit-slider-thumb { appearance: none; width: 5px; height: 9px; background: #eee; border: 1px solid #888; }
.status .round:last-child { margin-right: 2px; }

.minibar { position: absolute; left: 94px; top: 92px; width: 159px; padding: 1px 0 0; background: #fff; border: 1px solid #b7bdc8; border-radius: 1px; box-shadow: 1px 1px 2px #8887; }
.minibar .row { height: 16px; }
.minibar .row:last-child { height: 14px; }
.minibar .combo { border-color: transparent #e2e4e8 transparent transparent; }
.m-name { width: 42px; }
.m-size { width: 26px; }

.menu { position: absolute; left: 94px; top: 134px; width: 116px; background: linear-gradient(90deg, #fff 15px, #e5e7ea 15px, #e5e7ea 16px, #fff 16px); border: 1px solid #a9b3c0; box-shadow: 1px 1px 2px #6668; color: #333; }
.menu > button, .menuhead { display: flex; width: 100%; height: 15px; align-items: center; justify-content: flex-start; padding-left: 20px; position: relative; }
.menu > button svg, .menuhead svg { position: absolute; left: 3px; }
.menuhead { height: 13px; background: linear-gradient(90deg, transparent 16px, #eff1f4 16px); }
.pasteopts { height: 18px; display: flex; align-items: center; padding-left: 19px; }
.pasteopts button { width: 13px; height: 13px; background: #fbe3a5; border: 1px solid #e6c273; }
.menu hr { margin: 0 1px 0 18px; height: 2px; border: 0; border-top: 1px dotted #c9ccd1; }
.menu hr.thin { height: 1px; }
.menu .sub::after { content: ""; position: absolute; right: 6px; width: 3px; height: 4px; background: #2c3a66; clip-path: polygon(0 0, 100% 50%, 0 100%); }
.menu .hot { background: linear-gradient(#fdeeb3, #fbdc6f 50%, #fce9a0); box-shadow: inset 0 0 0 1px #f1d16f; }
.menu button:disabled { color: #aaa; }
.marker { position: absolute; left: 66px; top: 312px; width: 174px; height: 38px; border: 2px solid #f13c3c; }

.watermark { position: absolute; right: 54px; bottom: 21px; width: 178px; color: #eaf4fd; text-shadow: 0 0 2px #7da7cc; }
.wm-top { display: flex; align-items: flex-end; height: 60px; }
.bai { width: 60px; font: 700 40px/38px "Open Sans", sans-serif; }
.paw { position: relative; width: 54px; height: 58px; filter: drop-shadow(0 0 1px #7da7cc); }
.paw svg { width: 54px; height: 58px; }
.paw b { position: absolute; left: 0; right: 0; bottom: 2px; text-align: center; font: 700 27px/28px "Open Sans", sans-serif; color: #8dbde6; text-shadow: none; }
.jy { font: 700 30px/38px "Noto Sans CJK SC", sans-serif; white-space: nowrap; }
.wm-url { font: 21px/26px "Noto Sans", sans-serif; white-space: nowrap; }

.pill { position: absolute; right: 28px; bottom: 45px; width: 60px; height: 30px; padding: 4px 0 0 10px; display: flex; flex-direction: column; border-radius: 15px; background: #2d3948dd; color: #cfd5dc; line-height: 11px; }
.pill i { font-style: normal; }
.up-arrow { color: #35b6e8; }
.down-arrow { color: #f3a53b; }
.boost { position: absolute; right: 9px; bottom: 40px; width: 53px; height: 45px; }
.ball { position: absolute; display: flex; align-items: center; justify-content: center; border-radius: 50%; }
.dark { right: 0; bottom: 0; width: 39px; height: 39px; padding-left: 2px; color: #fff; font: 15px/16px Roboto, sans-serif; border: 2px solid #24a7ab; border-left-color: #24344a; background: linear-gradient(#22303f 52%, #11506d 52%); }
.dark small { font-size: 8px; }
.crown { position: absolute; left: 0; top: -8px; width: 14px; height: 14px; }
.green { right: 17px; bottom: 3px; width: 40px; height: 40px; flex-direction: column; color: #333; background: #fff; border: 3px solid #2fdc68; border-left-color: #d9f5e2; box-shadow: 0 0 2px #7c8; }
.green span { font: 15px/16px Roboto, sans-serif; }
.green small { font-size: 8px; }
.green em { font: 6px/8px Roboto, sans-serif; }
.green i { color: #18a848; font-style: normal; }
```
